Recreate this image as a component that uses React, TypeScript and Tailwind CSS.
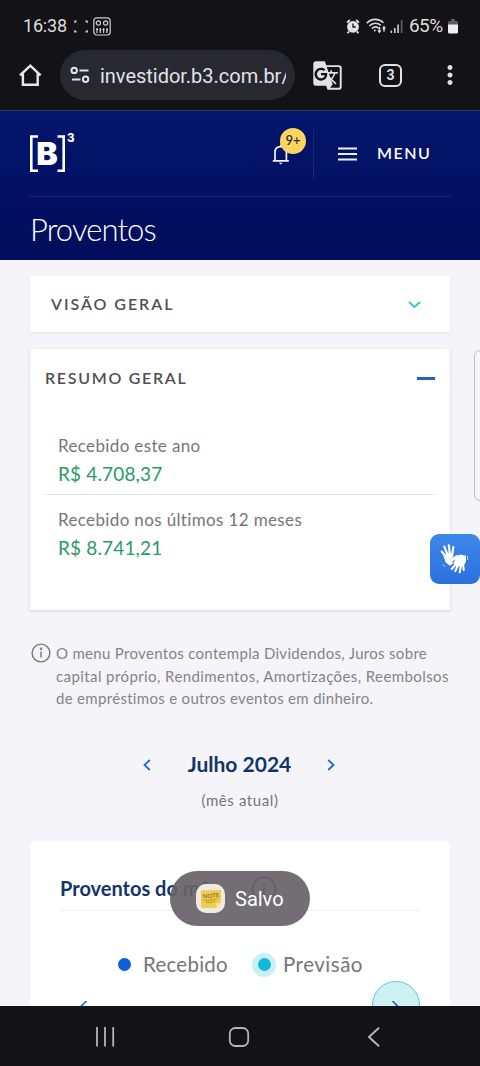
import { MdGTranslate, MdMoreVert } from "react-icons/md";

const StatusBar = () => {
  return (
    <div className="h-[50px] pt-[2px] flex items-center justify-between pl-[23px] pr-[22px] font-[Roboto] text-[#dcdcdc]">
      <div className="flex items-center">
        <span className="w-[44px] text-[18px] leading-[20px] tracking-[-0.2px] whitespace-nowrap">16:38</span>
        <svg className="ml-[7px]" width="14" height="15" viewBox="0 0 16 16" fill="none" stroke="#c8c8c8" strokeWidth="1.5">
          <path d="M1 4V2h2M13 2h2v2M1 12v2h2M13 14h2v-2" />
        </svg>
        <svg className="ml-[5px]" width="18" height="19" viewBox="0 0 18 19" fill="none" stroke="#cfcfcf" strokeWidth="1.2">
          <rect x="0.8" y="0.8" width="16.4" height="17.2" rx="3" />
          <circle cx="5.4" cy="6" r="2.1" />
          <circle cx="12.6" cy="6" r="2.1" />
          <path d="M4 11v5M7.3 11v5M10.6 11v5M14 11v5M3 12.5h2M6.3 13.2h2M9.6 12.5h2M13 13.2h2" />
        </svg>
      </div>
      <div className="flex items-center">
        <svg width="14" height="15" viewBox="0 0 14 15">
          <circle cx="7" cy="7.8" r="5.9" fill="#e4e4e4" />
          <path d="M1 3.6 3.8 1M13 3.6 10.2 1M3 12.4l-1.4 1.8M11 12.4l1.4 1.8" stroke="#e4e4e4" strokeWidth="1.8" fill="none" />
          <path d="M7 4.6v3.4h2.7" stroke="#131315" strokeWidth="1.3" fill="none" />
        </svg>
        <svg className="ml-[6px]" width="21" height="16" viewBox="0 0 21 16" fill="none" stroke="#dcdcdc" strokeWidth="1.6">
          <path d="M0.8 5.2C5.6 0.2 12.8 0.2 17.4 4.8" />
          <path d="M3.4 8C6.8 4.4 11.6 4.4 14.8 7.4" />
          <path d="M6 10.6c2-2 4.6-2 6.4-.6" />
          <circle cx="8.8" cy="12.6" r="1" fill="#dcdcdc" stroke="none" />
          <path d="M13.4 9v5M18 13.6V9" />
          <path d="M11.4 12.4h4l-2 3zM16 10.4h4l-2-3z" fill="#dcdcdc" stroke="none" />
        </svg>
        <svg className="ml-[3px]" width="13" height="14" viewBox="0 0 13 14">
          <path d="M0.5 11.5h1.6V14H.5zM4 9h1.6v5H4zM7.3 5.5h1.6V14H7.3z" fill="#d0d0d0" />
          <path d="M10.8 1h1.6v13h-1.6z" fill="#626264" />
        </svg>
        <span className="ml-[6px] w-[37px] text-[19px] leading-[20px] tracking-[-0.6px] whitespace-nowrap">65%</span>
        <svg className="ml-[2px]" width="10" height="15" viewBox="0 0 10 15">
          <path d="M3 0h4v2h1.5a1.5 1.5 0 0 1 1.5 1.5V6H0V3.5A1.5 1.5 0 0 1 1.5 2H3z" fill="#5c5c5e" />
          <path d="M0 5.5h10V13a1.5 1.5 0 0 1-1.5 1.5h-7A1.5 1.5 0 0 1 0 13z" fill="#eeeeee" />
        </svg>
      </div>
    </div>
  );
};

const BrowserBar = () => {
  return (
    <div className="h-[60px] flex items-start font-[Roboto] text-[#e2e2e6]">
      <div className="w-[60px] h-[50px] flex items-center pl-[18px]">
        <svg width="25" height="24" viewBox="0 0 25 24" fill="none" stroke="#e8e8ea" strokeWidth="2.4">
          <path d="M2 12.4 12.3 2.6 22.6 12.4M4.9 10.5v11.2h14.8V10.5" />
        </svg>
      </div>
      <div className="w-[235px] h-[50px] rounded-full bg-[#272830] flex items-center pl-[10px] overflow-hidden">
        <svg width="21" height="18" viewBox="0 0 21 18" fill="none" stroke="#e2e2e6" strokeWidth="2">
          <circle cx="4.2" cy="4.4" r="2.7" />
          <path d="M9.5 4.4h9M2 13.4h8.500" />
          <circle cx="15.6" cy="13.2" r="2.7" />
        </svg>
        <div className="ml-[9px] w-[186px] pt-px overflow-hidden whitespace-nowrap text-[20px] leading-[26px] tracking-[-0.02px]">
          investidor.b3.com.br/
        </div>
      </div>
      <div className="flex-1 h-[50px] flex items-center">
        <MdGTranslate className="ml-[17px] text-[#e2e2e6]" size={31} />
        <div className="ml-[36px] w-[23px] h-[23px] rounded-[6px] border-[2.5px] border-[#e2e2e6] flex items-center justify-center text-[14px] leading-none font-bold">
          3
        </div>
        <MdMoreVert className="ml-[33px]" size={30} />
      </div>
    </div>
  );
};

const Header = () => {
  return (
    <header className="h-[150px] px-[30px] bg-linear-to-b from-[#03166d] to-[#020c5b] border-t border-[#33414a] text-white">
      <div className="h-[86px] flex items-center border-b border-[#1a2a72]">
        <svg className="mb-[3px]" width="46" height="42" viewBox="0 0 46 42">
          <path d="M8 5.5H1.3V39.700H8M27.500 5.500h6.200v34.200h-6.200" fill="none" stroke="#fff" strokeWidth="2.6" />
          <text x="6.3" y="34" fontFamily="Inter" fontSize="31" fontWeight="900" fill="#fff" textLength="21.500" lengthAdjust="spacingAndGlyphs">B</text>
          <text x="37" y="10.500" fontFamily="Inter" fontSize="11.500" fontWeight="800" fill="#fff">3</text>
        </svg>
        <div className="relative ml-[196px] mt-[2px] w-[17px] h-[22px]">
          <svg width="17" height="22" viewBox="0 0 17 22" fill="none" stroke="#f4f6ff" strokeWidth="1.7">
            <path d="M.8 16.800h16M3 16.800V8.600C3 5 5.200 2.700 8.700 2.700s5.700 2.300 5.700 5.900v8.200M8.700 2.700V.8" />
            <path d="M6.800 18.800h3.800l-1.900 1.800z" fill="#f4f6ff" stroke="none" />
          </svg>
          <span className="absolute left-[8px] top-[-16px] w-[26px] h-[26px] rounded-full bg-[#fdd45c] flex items-center justify-center text-[13px] leading-none text-[#283250] font-[Lato] font-semibold">
            9+
          </span>
        </div>
        <div className="ml-[24px] w-px h-[50px] bg-[#1a2a72]" />
        <svg className="ml-[24px] mt-px" width="19" height="14" viewBox="0 0 19 14" stroke="#eef2ff" strokeWidth="1.800">
          <path d="M0 1.500h19M0 7h19M0 12.500h19" />
        </svg>
        <span className="ml-[20px] mb-[2px] font-[Lato] font-semibold text-[16px] leading-[20px] tracking-[1.5px] whitespace-nowrap">MENU</span>
      </div>
      <h1 className="pt-[12px] font-[Lato] font-light text-[31px] leading-[40px] tracking-[-0.9px]">Proventos</h1>
    </header>
  );
};

const LibrasButton = () => {
  return (
    <div className="absolute left-[430px] top-[534px] w-[50px] h-[50px] rounded-[9px] bg-linear-to-b from-[#3d87ea] to-[#2c70dc]">
      <svg width="50" height="50" viewBox="0 0 50 50" fill="none" stroke="#fff" strokeLinecap="round" strokeLinejoin="round">
        <path d="M17 24 11.700 17.500M18 22 14.300 12.500M20 21 18.800 11.300M22 22.500 23.300 13" strokeWidth="2.100" />
        <path d="M14.500 22 20 19.500 22 22 19 25.500 22 29 20 30.500 16.500 28z" fill="#fff" strokeWidth="2" />
        <path d="M21 26.500 27 22.500" strokeWidth="3" />
        <path d="M27 24 30 21.500 35 22.500 35 27 33 31 26.500 31.500 24.500 29z" fill="#fff" strokeWidth="2" />
        <path d="M26 30 21.700 35M28 31 25.300 37.200M31 31 29.700 38.300M33 30 33.700 36" strokeWidth="2.100" />
        <path d="M37.500 22.500l.300 3M13 30.500l2 2" strokeWidth="1" stroke="#bcd6fa" />
      </svg>
    </div>
  );
};

const Toast = () => {
  return (
    <div className="absolute left-[170px] top-[871px] w-[140px] h-[55px] rounded-full bg-[#676267]/92 flex items-center pl-[26px]">
      <div className="w-[29px] h-[29px] rounded-[10px] bg-[#eee9e3] flex items-center justify-center">
        <svg width="22" height="20" viewBox="0 0 22 20">
          <path d="M1 1.500 21 1v13l-4.500 5H1z" fill="#e8cf4e" />
          <path d="M21 14l-5 .500.500 4.500z" fill="#fae98c" />
          <text x="3" y="9" fontFamily="Lato" fontSize="6" fontWeight="900" fill="#a8782c" transform="rotate(-4 10 8)">NOTE</text>
          <path d="M4 11.500l13-1M6 13.500l9-.800" stroke="#b98a34" strokeWidth=".900" />
        </svg>
      </div>
      <span className="ml-[10px] font-[Roboto] text-[20px] leading-[24px] text-white">Salvo</span>
    </div>
  );
};

const NavBar = () => {
  return (
    <div className="absolute left-0 top-[1006px] w-full h-[60px] bg-[#131216]">
      <div className="h-full flex items-center pt-[2px]">
        <svg className="ml-[95px]" width="20" height="20" viewBox="0 0 20 20" stroke="#b4b4b6" strokeWidth="1.800">
          <path d="M2 0v19.500M10 0v19.500M18.200 0v19.500" />
        </svg>
        <svg className="ml-[113px]" width="22" height="20" viewBox="0 0 22 20" fill="none" stroke="#b4b4b6" strokeWidth="1.800">
          <rect x="1.800" y="1" width="18.400" height="18" rx="5.500" />
        </svg>
        <svg className="ml-[117px]" width="14" height="20" viewBox="0 0 14 20" fill="none" stroke="#b4b4b6" strokeWidth="2">
          <path d="M12 .800 2 10l10 9.200" />
        </svg>
      </div>
    </div>
  );
};

const totals = [
  { label: "Recebido este ano", value: "R$ 4.708,37" },
  { label: "Recebido nos últimos 12 meses", value: "R$ 8.741,21" },
];

const App = () => {
  return (
    <div className="relative w-[480px] h-[1066px] overflow-hidden bg-[#f5f4f8] font-[Lato] text-[#77757b]">
      <div className="bg-[#131315]">
        <StatusBar />
        <BrowserBar />
      </div>
      <Header />

      <main className="px-[30px] pt-[16px]">
        {/* Visão geral */}
        <section className="h-[56px] bg-white shadow-[0_1px_2px_rgba(0,0,0,0.08)] flex items-center justify-between pl-[21px] pr-[29px]">
          <h2 className="mb-px text-[16px] leading-[20px] font-semibold tracking-[1.95px] text-[#504e52]">VISÃO GERAL</h2>
          <svg className="mt-px" width="13" height="8" viewBox="0 0 13 8" fill="none" stroke="#3fc0d6" strokeWidth="2">
            <path d="M1 1l5.500 5L12 1" />
          </svg>
        </section>

        {/* Resumo geral */}
        <section className="mt-[17px] h-[261px] bg-white shadow-[0_1px_3px_rgba(0,0,0,0.14)] px-[15px]">
          <div className="h-[58px] flex items-center justify-between">
            <h2 className="text-[16px] leading-[20px] font-semibold tracking-[1.7px] text-[#504e52]">RESUMO GERAL</h2>
            <div className="w-[18px] h-[3px] bg-[#1f66c0]" />
          </div>
          <div className="pt-[14px]">
            {totals.map((total, index) => (
              <div
                key={total.label}
                className={`pl-[13px] pt-[13px] ${index === 0 ? "h-[74px] border-b border-[#e4e4e8]" : "h-[73px]"}`}
              >
                <p className="text-[17px] leading-[24px] tracking-[0.36px] whitespace-nowrap">{total.label}</p>
                <p className="mt-[2px] text-[19px] leading-[27px] tracking-[0.15px] text-[#2a9a68]">{total.value}</p>
              </div>
            ))}
          </div>
        </section>

        <div className="mt-[32px] flex items-start">
          <svg className="ml-px mt-px" width="20" height="20" viewBox="0 0 20 20" fill="none" stroke="#77757b" strokeWidth="1.400">
            <circle cx="10" cy="10" r="8.900" />
            <path d="M10 8.500v6" />
            <circle cx="10" cy="5.800" r=".500" fill="#77757b" />
          </svg>
          <p className="ml-[5px] text-[15px] leading-[22.700px] text-[#858388] whitespace-nowrap">
            <span className="block tracking-[0.31px]">O menu Proventos contempla Dividendos, Juros sobre</span>
            <span className="block tracking-[0.41px]">capital próprio, Rendimentos, Amortizações, Reembolsos</span>
            <span className="block tracking-[0.31px]">de empréstimos e outros eventos em dinheiro.</span>
          </p>
        </div>

        <div className="mt-[40px] flex items-center justify-center">
          <svg className="mt-[2px] mr-px" width="8" height="12" viewBox="0 0 8 12" fill="none" stroke="#1f6bd0" strokeWidth="1.800">
            <path d="M6.800 1 1.500 6l5.300 5" />
          </svg>
          <h3 className="w-[175px] text-center text-[21px] leading-[28px] font-bold text-[#13346a]">Julho 2024</h3>
          <svg className="mt-[2px] mr-[2px]" width="8" height="12" viewBox="0 0 8 12" fill="none" stroke="#1f6bd0" strokeWidth="1.800">
            <path d="M1.200 1 6.500 6l-5.300 5" />
          </svg>
        </div>
        <p className="mt-[11px] text-center text-[15px] leading-[22px] tracking-[0.6px]">(mês atual)</p>

        {/* Proventos do mês */}
        <section className="mt-[30px] h-[240px] rounded-[5px] bg-white px-[30px]">
          <div className="h-[70px] pt-[34px] border-b border-[#f1f1f4] flex items-start">
            <h3 className="w-[178px] text-[20px] leading-[26px] font-bold text-[#13346a] whitespace-nowrap">Proventos do mês</h3>
            <svg className="ml-[13px] mt-px" width="26" height="26" viewBox="0 0 26 26" fill="none" stroke="#4a4a50" strokeWidth="1.800">
              <circle cx="13" cy="13" r="11.500" />
              <path d="M13 11.500v7M13 7v2" />
            </svg>
          </div>
          <div className="mt-[39px] flex items-center text-[20.500px] leading-[28px]">
            <span className="ml-[58px] mt-px w-[13px] h-[13px] rounded-full bg-[#0b5fd8]" />
            <span className="ml-[12px] w-[85px] whitespace-nowrap tracking-[0.25px]">Recebido</span>
            <span className="ml-[24px] mt-px w-[24px] h-[24px] rounded-full bg-[#c9f0f5] flex items-center justify-center">
              <span className="w-[13px] h-[13px] rounded-full bg-[#11b9dc]" />
            </span>
            <span className="ml-[7px] whitespace-nowrap tracking-[0.5px]">Previsão</span>
          </div>
          <div className="mt-[3px] flex items-center justify-between">
            <svg className="ml-[18px] mt-[8px]" width="10" height="16" viewBox="0 0 10 16" fill="none" stroke="#2a66c8" strokeWidth="1.700">
              <path d="M8.500 0 1 7.500 8.500 15" />
            </svg>
            <span className="w-[48px] h-[48px] rounded-full border border-[#5cc8d2] bg-[#cef1f3] flex items-center justify-center">
              <svg className="mt-[8px]" width="10" height="16" viewBox="0 0 10 16" fill="none" stroke="#2458b8" strokeWidth="1.700">
                <path d="M1.500 0 9 7.500 1.500 15" />
              </svg>
            </span>
          </div>
        </section>
      </main>

      {/* side handle of the edge panel */}
      <div className="absolute left-[474px] top-[350px] w-[14px] h-[151px] rounded-[6px] border-[1.500px] border-[#bdbbc0] bg-[#f6f5f8]" />
      <LibrasButton />
      <Toast />
      <NavBar />
    </div>
  );
};

export default App;
